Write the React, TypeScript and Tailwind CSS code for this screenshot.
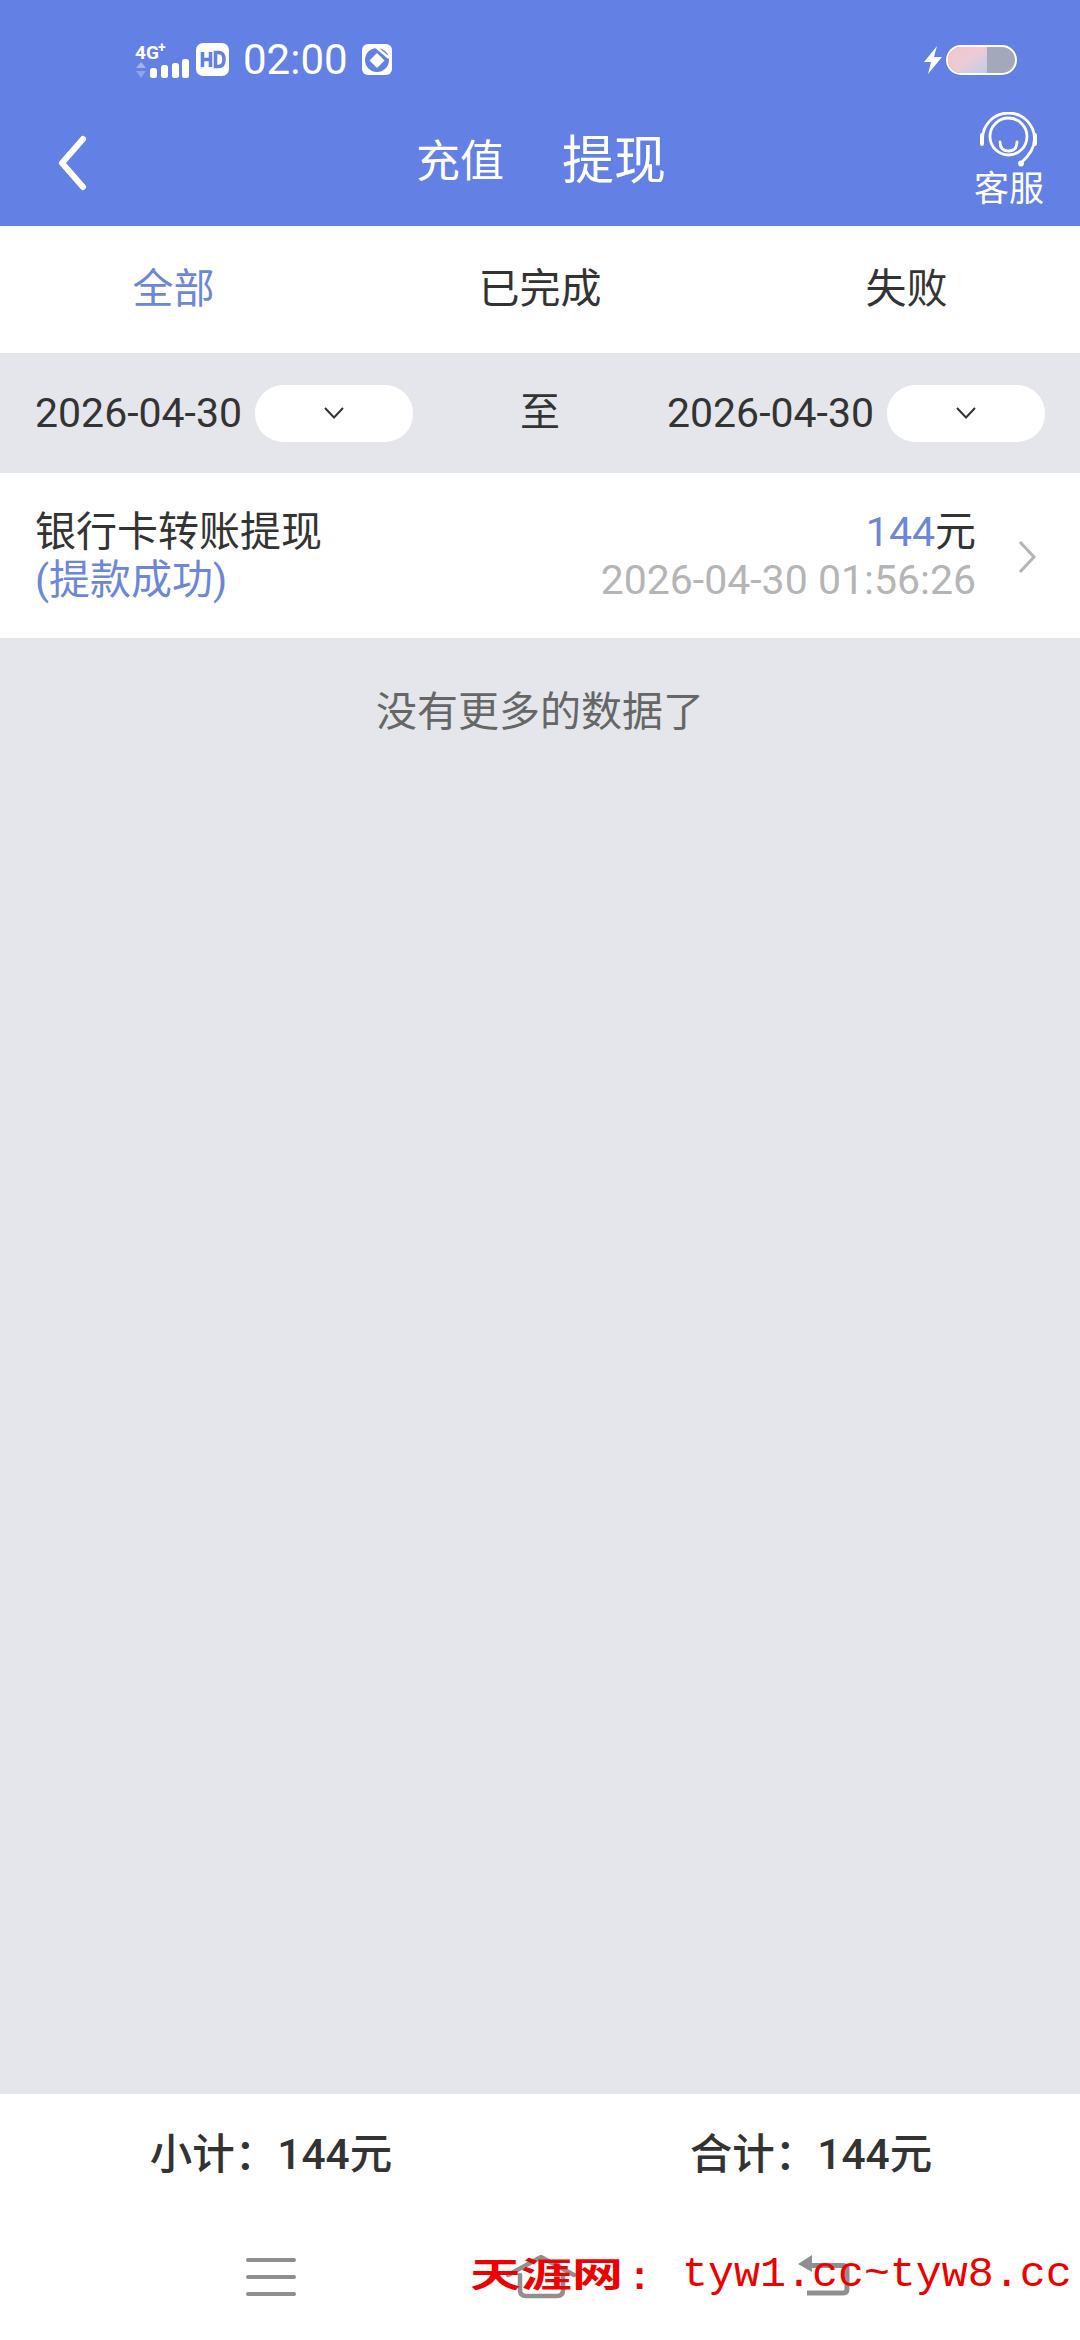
import React from "react";

const F = "font-['Roboto','Noto_Sans_CJK_SC',sans-serif]";

function Signal() {
  return (
    <svg className="overflow-visible" width="56" height="40" viewBox="0 0 56 40">
      <text x="0" y="19" fontSize="19" fontWeight="700" fill="#fff" fontFamily="Roboto, sans-serif">4G</text>
      <text x="23" y="12" fontSize="14" fontWeight="700" fill="#fff" fontFamily="Roboto, sans-serif">+</text>
      <path d="M6 22l5 6H1z" fill="#a3b3f0" />
      <path d="M6 38l5-7H1z" fill="#8fa3ee" />
      <rect x="15" y="28" width="7" height="10" rx="2.500" fill="#fff" />
      <rect x="26" y="25" width="7" height="13" rx="2.500" fill="#fff" />
      <rect x="37" y="23" width="7" height="15" rx="2.500" fill="#fff" />
      <rect x="47" y="19" width="7" height="19" rx="2.500" fill="#fff" />
    </svg>
  );
}

function Chevron() {
  return (
    <svg width="20" height="12" viewBox="0 0 20 12" fill="none" stroke="#333" strokeWidth="2">
      <path d="M1 1l9 9.500L19 1" />
    </svg>
  );
}

function DateSel() {
  return (
    <div className="flex items-center gap-[13px]">
      <span className="text-[41px] leading-none text-[#333]">2026-04-30</span>
      <div className="flex h-[57px] w-[158px] items-center justify-center rounded-[28px] bg-white">
        <Chevron />
      </div>
    </div>
  );
}

export default function App() {
  return (
    <div className={`${F} relative flex h-[2340px] w-[1080px] flex-col overflow-hidden bg-[#e4e6eb]`}>
      <header className="h-[226px] shrink-0 bg-[#6380e4] text-white">
        <div className="flex h-[106px] items-center pt-[13px] pl-[135px] pr-[63px]">
          <Signal />
          <svg className="ml-[5px]" width="33" height="33" viewBox="0 0 33 33">
            <rect width="33" height="33" rx="7" fill="#fff" />
            <path d="M6.500 9v15M6.500 16.500h8M14.500 9v15" stroke="#6380e4" strokeWidth="3.600" fill="none" />
            <path d="M19.500 9.500v14h3q5.500 0 5.500-7t-5.500-7z" stroke="#6380e4" strokeWidth="3.600" fill="none" />
          </svg>
          <span className="ml-[14px] text-[42px] leading-none">02:00</span>
          <svg className="ml-[14px]" width="30" height="31" viewBox="0 0 30 31">
            <rect width="30" height="31" rx="6" fill="#fff" />
            <circle cx="15" cy="16" r="12" fill="#6380e4" />
            <path d="M15 9l7.500 7.500L15 24l-7.500-7.500z" fill="#fff" />
            <path d="M14 3l13 11" stroke="#fff" strokeWidth="2.500" />
            <path d="M19 1l11 10" stroke="#fff" strokeWidth="2.500" />
          </svg>
          <div className="ml-auto flex items-center gap-[4px]">
            <svg width="18" height="28" viewBox="0 0 18 28">
              <path d="M13 0L0 16h7l-3 12L18 11h-8z" fill="#fff" />
            </svg>
            <div className="flex h-[30px] w-[71px] overflow-hidden rounded-full border-2 border-white bg-[#a3a8bb]">
              <div className="h-full w-[39px] bg-gradient-to-br from-[#f4c6cb] via-[#eccbd6] to-[#bccdea]" />
            </div>
          </div>
        </div>
        <div className="flex items-start">
          <svg className="ml-[57px] mt-[29px]" width="32" height="56" viewBox="0 0 32 56" fill="none" stroke="#fff" strokeWidth="6" strokeLinecap="round" strokeLinejoin="round">
            <path d="M26 4L5 28l21 24" />
          </svg>
          <div className="ml-[327px] mt-[24px] flex items-center gap-[58px]">
            <span className="text-[44px] leading-[64px]">充值</span>
            <span className="text-[52px] leading-[64px]">提现</span>
          </div>
          <div className="ml-[308px] mt-[6px] flex flex-col items-center">
            <svg width="60" height="60" viewBox="0 0 60 60" fill="none" stroke="#fff" strokeWidth="2.800" strokeLinecap="round">
              <path d="M3.500 27a26 26 0 0 1 52 0q0 12-13.500 24" />
              <circle cx="29.500" cy="24.500" r="18.500" />
              <path d="M21 30q0 9 8.500 9T38 30" />
              <path d="M3 23v9M56 23v9" strokeWidth="4" />
              <circle cx="42" cy="51.500" r="1.500" fill="#fff" />
            </svg>
            <span className="mt-[-2px] text-[35px] leading-[40px]">客服</span>
          </div>
        </div>
      </header>

      <nav className="flex h-[127px] shrink-0 items-center bg-white text-[41px] text-[#333]">
        <span className="w-[347px] text-center text-[#6d86d9]">全部</span>
        <span className="w-[386px] text-center">已完成</span>
        <span className="w-[347px] text-center">失败</span>
      </nav>

      <section className="flex h-[120px] shrink-0 items-center justify-between px-[35px]">
        <DateSel />
        <span className="text-[40px] text-[#333]">至</span>
        <DateSel />
      </section>

      <section className="flex h-[165px] shrink-0 items-center justify-between bg-white pl-[35px] pr-[43px]">
        <div className="flex flex-col">
          <span className="text-[41px] leading-[48px] text-[#333]">银行卡转账提现</span>
          <span className="text-[41px] leading-[48px] text-[#6d86d9]">(提款成功)</span>
        </div>
        <div className="flex items-center gap-[42px]">
          <div className="flex flex-col items-end">
            <span className="text-[41px] leading-[48px] text-[#333]"><span className="text-[#6d86d9]">144</span>元</span>
            <span className="text-[41px] leading-[48px] text-[#b5b5b5]">2026-04-30 01:56:26</span>
          </div>
          <svg className="mt-[3px]" width="19" height="32" viewBox="0 0 19 32" fill="none" stroke="#b5b5b5" strokeWidth="3">
            <path d="M2 1l14 15L2 31" />
          </svg>
        </div>
      </section>

      <p className="mt-[38px] flex-1 text-center text-[41px] leading-[72px] text-[#666]">没有更多的数据了</p>

      <footer className="h-[246px] shrink-0 bg-white">
        <div className="flex h-[122px] items-center text-[42.500px] font-medium text-[#333]">
          <span className="w-[542px] text-center">小计：144元</span>
          <span className="w-[538px] text-center">合计：144元</span>
        </div>
        <div className="flex h-[124px] items-start">
          <svg className="ml-[246px] mt-[42px]" width="50" height="38" viewBox="0 0 50 38" stroke="#8f8f8f" strokeWidth="4" strokeLinecap="round">
            <path d="M2 2h46M2 19h46M2 36h46" />
          </svg>
          <svg className="ml-[210px] mt-[39px]" width="70" height="44" viewBox="0 0 70 44" fill="none" stroke="#8f8f8f" strokeWidth="4.500" strokeLinecap="round">
            <path d="M2 20L35 2l33 18" />
            <path d="M14 20v15q0 6 6 6h31q6 0 6-6V20" />
          </svg>
          <svg className="ml-[222px] mt-[39px]" width="52" height="42" viewBox="0 0 52 42" fill="none" stroke="#8f8f8f" strokeWidth="5">
            <path d="M12 10.500h33q4 0 4 4V34q0 4-4 4H9" />
            <path d="M14 0v17L0 9z" fill="#8f8f8f" stroke="none" />
          </svg>
        </div>
      </footer>

      <div className="absolute left-[470px] top-[2240px] flex h-[70px] items-center whitespace-nowrap text-[#ee0000]">
        <span className="w-[153px] scale-y-[0.66] text-[51px] font-bold leading-none">天涯网</span>
        <span className="ml-[10px] w-[22px] font-['Liberation_Sans',sans-serif] text-[40px] font-bold leading-none">:</span>
        <span className="ml-[27px] font-['Liberation_Mono',monospace] text-[43.300px] leading-none">tyw1.cc~tyw8.cc</span>
      </div>
    </div>
  );
}
